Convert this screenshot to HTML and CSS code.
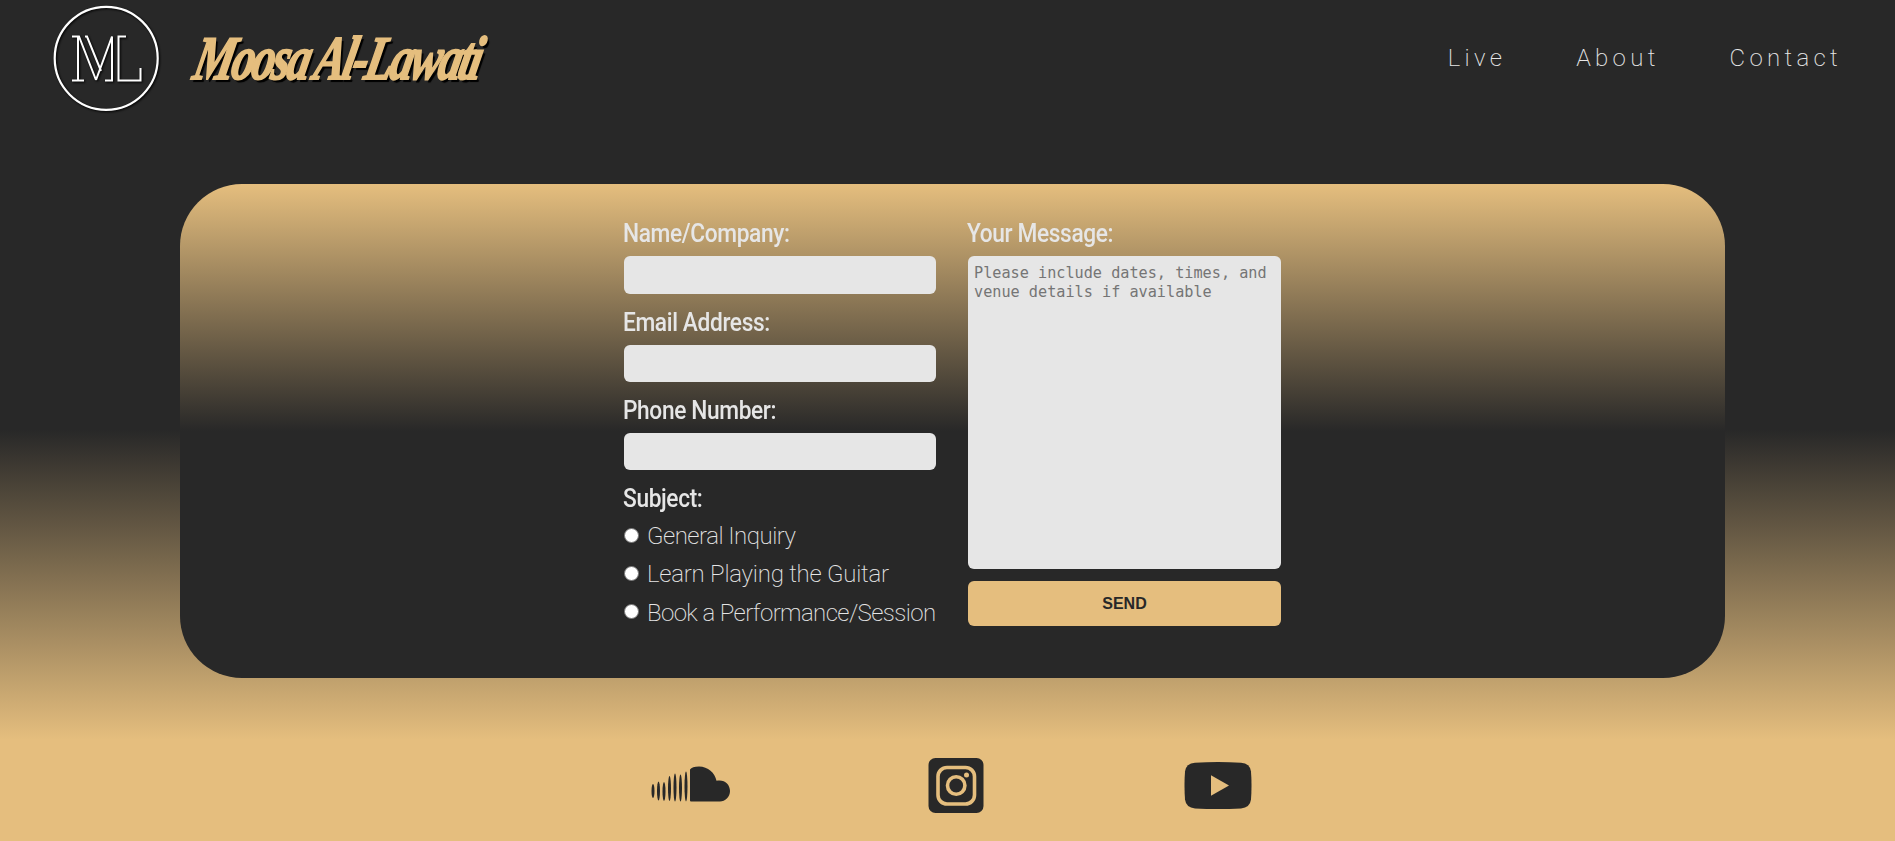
FILE: index.html
```html
<!DOCTYPE html>
<html lang="en">
<head>
<meta charset="utf-8">
<title>Moosa Al-Lawati</title>
<link rel="stylesheet" href="styles.css">
</head>
<body>
<header class="header">
  <a class="brand" href="#">
    <svg class="logo" viewBox="0 0 110 112" fill="none" stroke="#fff">
      <circle cx="53.2" cy="58.3" r="51.5" stroke-width="2.2"/>
      <path stroke-width="2" d="M19 36.500H26L43 80M19 80.500H31M25 36.500V80.500M32 36.500H34L48 71M43 80L59 36.500V80.500H52M73 36.500H65.500V80.500H87.500V68"/>
    </svg>
    <span class="brand-name">Moosa Al-Lawati</span>
  </a>
  <nav class="nav">
    <a href="#">Live</a>
    <a href="#">About</a>
    <a href="#">Contact</a>
  </nav>
</header>
<main class="card">
  <form class="form">
    <div class="column">
      <label class="label" for="name">Name/Company:</label>
      <input class="field first" id="name" type="text">
      <label class="label" for="email">Email Address:</label>
      <input class="field" id="email" type="text">
      <label class="label" for="phone">Phone Number:</label>
      <input class="field" id="phone" type="text">
      <span class="label subject">Subject:</span>
      <label class="option"><input class="radio" type="radio" name="subject"><span class="general">General Inquiry</span></label>
      <label class="option"><input class="radio" type="radio" name="subject"><span class="learn">Learn Playing the Guitar</span></label>
      <label class="option"><input class="radio" type="radio" name="subject"><span class="book">Book a Performance/Session</span></label>
    </div>
    <div class="column">
      <label class="label" for="message">Your Message:</label>
      <textarea class="message" id="message" placeholder="Please include dates, times, and venue details if available"></textarea>
      <button class="send" type="button">SEND</button>
    </div>
  </form>
</main>
<footer class="social">
  <svg class="soundcloud" viewBox="0 0 80 36" fill="#282828">
    <ellipse cx="2" cy="25" rx="1.500" ry="7"/><ellipse cx="7.500" cy="25" rx="1.500" ry="9.500"/><ellipse cx="13" cy="25.500" rx="1.500" ry="9.500"/><ellipse cx="18.500" cy="22.500" rx="1.500" ry="12.500"/><ellipse cx="24" cy="21.500" rx="1.500" ry="14"/><ellipse cx="29.500" cy="22" rx="1.500" ry="13.500"/><ellipse cx="35" cy="20.500" rx="1.500" ry="15"/>
    <path d="M39 3.500Q41 .5 48 .5C57 .5 64 7 65.500 14.800C73 13 79 18 79 25C79 31 74 35.500 69 35.500H40Q39 35.500 39 34.500Z"/>
  </svg>
  <svg class="instagram" viewBox="0 0 56 56">
    <rect x=".5" width="55" height="55" rx="7" fill="#282828"/>
    <g fill="none" stroke="#e5be7e" stroke-width="3.600"><rect x="10" y="9.500" width="36.500" height="36.500" rx="9"/><circle cx="28.200" cy="27.500" r="8.700"/></g>
    <circle cx="38.500" cy="17" r="2.500" fill="#e5be7e"/>
  </svg>
  <svg class="youtube" viewBox="0 0 68 48">
    <path fill="#282828" d="M11 .8Q34-.6 57 .8Q66 1.400 67 9.600Q68 23.600 67 37.600Q66 45.800 57 46.400Q34 47.800 11 46.400Q2 45.800 1 37.600Q0 23.600 1 9.600Q2 1.400 11 .8Z"/>
    <path fill="#e5be7e" d="M27 13.300L45 23.500L27 33.700Z"/>
  </svg>
</footer>
</body>
</html>
```
FILE: styles.css
```css
* { box-sizing: border-box; }
body {
  margin: 0;
  height: 841px;
  overflow: hidden;
  background: linear-gradient(#282828 0, #282828 430px, #e5be7e 740px);
  font-family: Roboto, "Open Sans", sans-serif;
  color: #e6e6e6;
}
.header { display: flex; justify-content: space-between; height: 112px; padding: 0 0 0 53px; }
.brand { display: flex; text-decoration: none; }
.logo { width: 110px; height: 112px; filter: drop-shadow(1px 1px 1px #000); }
.brand-name {
  margin: 28px 0 0 28px;
  font: italic bold 62px/60px "Liberation Serif", serif;
  letter-spacing: -3.5px;
  white-space: nowrap;
  color: #e5be7e;
  -webkit-text-stroke: 2px #e5be7e;
  text-shadow: 4px 3px 1px #000;
  transform: skewX(-12deg) scaleX(.735);
  transform-origin: 0 52px;
}
.nav { display: flex; padding: 41px 53px 0 0; gap: 70px; }
.nav a { font-size: 24px; line-height: 34px; font-weight: 200; letter-spacing: 4.3px; color: #e6e6e6; text-decoration: none; }
.card {
  width: 1545px;
  height: 494px;
  margin: 72px 0 0 180px;
  padding-top: 33px;
  border-radius: 62px;
  background: linear-gradient(#e5be7e, #282828 50%);
}
.form { display: flex; gap: 32px; width: 657px; margin-left: 444px; }
.column { display: flex; flex-direction: column; width: 312px; flex: none; }
.column + .column { width: 313px; }
.label {
  height: 39px;
  margin-left: -1px;
  font-size: 25px;
  line-height: 33px;
  font-weight: 500;
  letter-spacing: -.4px;
  white-space: nowrap;
  transform: scaleX(.908);
  transform-origin: 0 0;
}
.label.subject { height: 35px; }
.field { width: 100%; height: 37px; margin: 0 0 12px; border: 0; border-radius: 6px; background: #e6e6e6; }
.field.first { height: 38px; }
.option { display: flex; align-items: center; height: 38.300px; font-size: 24px; font-weight: 200; white-space: nowrap; }
.general { letter-spacing: -.5px; }
.learn { letter-spacing: -.23px; }
.book { letter-spacing: -.6px; }
.radio { flex: none; width: 15px; height: 15px; margin: -2px 8px 0 0; appearance: none; border: 1px solid #767676; border-radius: 50%; background: #fff; }
.message {
  height: 313px;
  padding: 8px 6px;
  border: 0;
  border-radius: 6px;
  background: #e6e6e6;
  resize: none;
  font: 15.200px/19px "DejaVu Sans Mono", monospace;
}
.message::placeholder { color: #757575; }
.send { height: 45px; margin-top: 12px; border: 0; border-radius: 6px; background: #e5be7e; color: #282828; font: bold 16px "Liberation Sans", sans-serif; }
.social { display: flex; align-items: center; height: 56px; margin: 80px 0 0 651px; }
.soundcloud { width: 80px; height: 36px; margin-bottom: 5px; }
.instagram { width: 56px; height: 56px; margin-left: 197px; }
.youtube { width: 68px; height: 48px; margin-left: 200px; }
```
